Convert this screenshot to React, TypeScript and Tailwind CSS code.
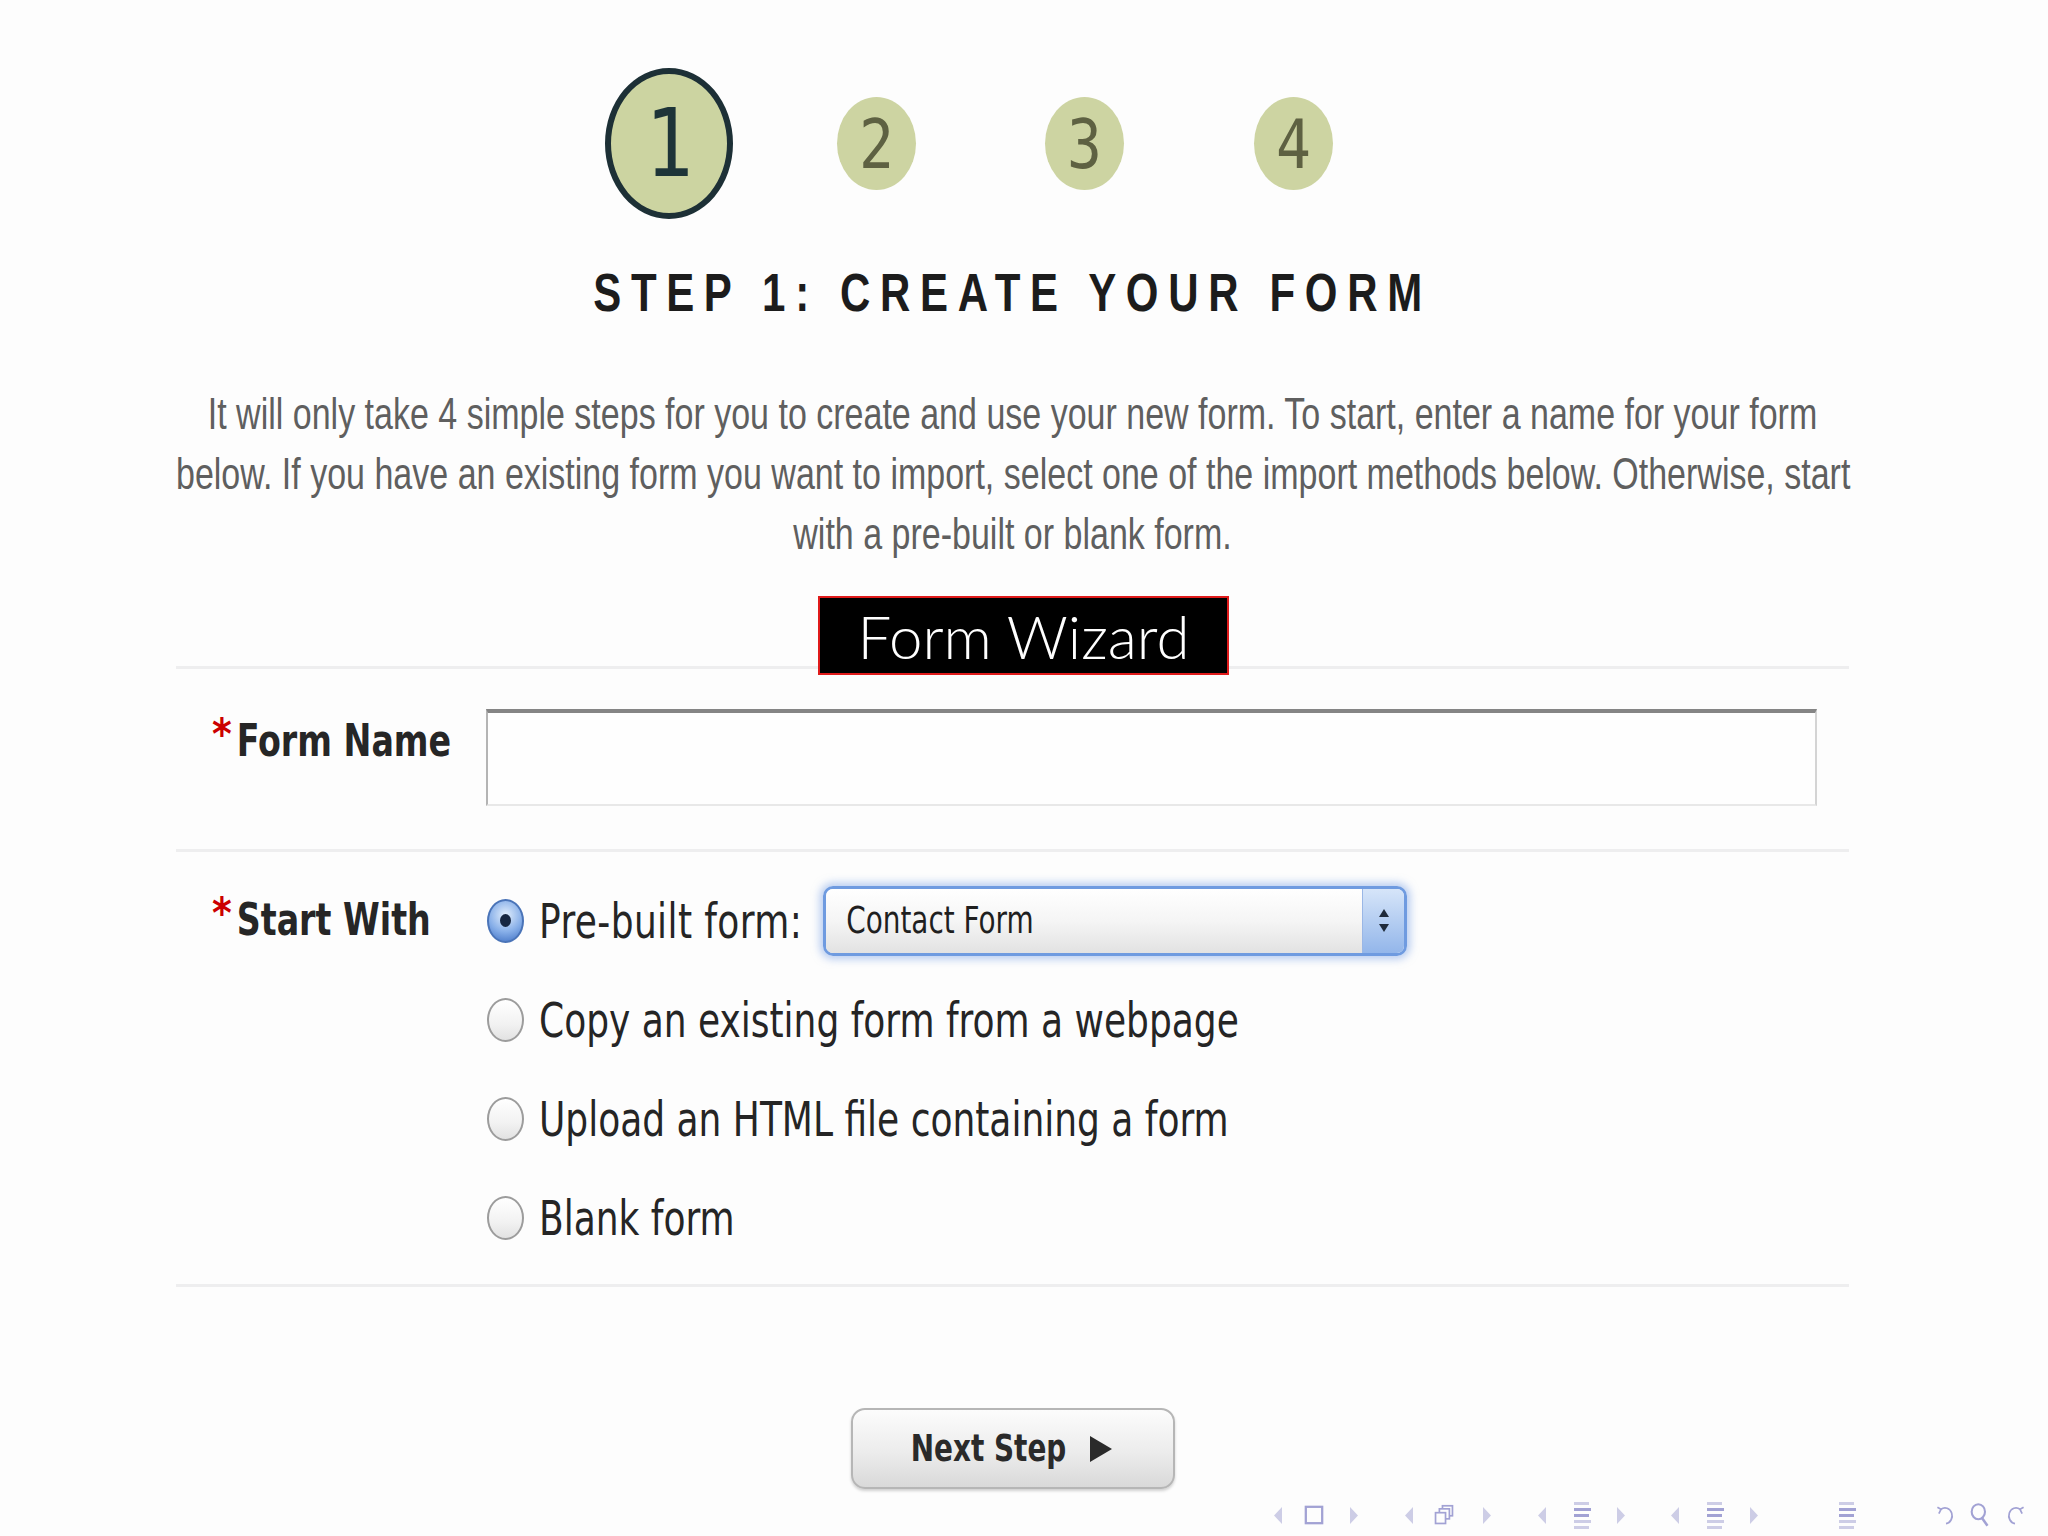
import React from 'react';

const condensed = "font-['DejaVu_Sans_Condensed','DejaVu_Sans',sans-serif] [font-stretch:condensed]";
const narrow = "font-['Liberation_Sans_Narrow','Liberation_Sans',sans-serif] [font-stretch:condensed]";

function StepCircle({ n, active, className = '' }: { n: number; active?: boolean; className?: string }) {
  if (active) {
    return (
      <div
        className={`flex h-[151px] w-[128px] items-center justify-center rounded-[50%] border-[6px] border-[#1d3036] bg-[#ccd4a1] ${className}`}
      >
        <span className="scale-y-[1.18] font-['DejaVu_Sans_Mono',monospace] text-[80px] leading-none text-[#1d3438]">
          {n}
        </span>
      </div>
    );
  }
  return (
    <div className={`flex h-[93px] w-[79px] items-center justify-center rounded-[50%] bg-[#cdd4a2] ${className}`}>
      <span className="scale-y-[1.18] font-['DejaVu_Sans_Mono',monospace] text-[58px] leading-none text-[#5e6142]">
        {n}
      </span>
    </div>
  );
}

function Radio({ checked }: { checked?: boolean }) {
  if (checked) {
    return (
      <span className="flex h-[44px] w-[37px] shrink-0 items-center justify-center rounded-[50%] border-2 border-[#4a74b8] bg-[radial-gradient(circle_at_50%_35%,#e2eefc,#86aee8_55%,#3e6fc2)]">
        <span className="h-[13px] w-[11px] rounded-[50%] bg-[#172640]" />
      </span>
    );
  }
  return (
    <span className="h-[44px] w-[37px] shrink-0 rounded-[50%] border-2 border-[#9c9c9c] bg-[linear-gradient(#ffffff,#f2f2f2_60%,#e2e2e2)]" />
  );
}

function Label({ text }: { text: string }) {
  return (
    <span className={`flex items-start text-[37px] leading-[40px] font-bold text-[#262626] ${condensed}`}>
      <span className="-mt-[8px] mr-[5px] text-[42px] leading-none text-[#cc0000]">*</span>
      <span className="inline-block scale-y-[1.2]">{text}</span>
    </span>
  );
}

const options = [
  'Copy an existing form from a webpage',
  'Upload an HTML file containing a form',
  'Blank form',
];

function NavIcons() {
  const light = '#cdcde6';
  const dark = '#a2a2d4';
  const tri = (dir: 'l' | 'r', ml: string) => (
    <span className={`flex w-[20px] justify-center ${ml}`}>
      <svg width="11" height="19" viewBox="0 0 11 19">
        <path d={dir === 'l' ? 'M10 1 L2 9.5 L10 18 Z' : 'M1 1 L9 9.5 L1 18 Z'} fill={light} />
      </svg>
    </span>
  );
  const lines = (ml: string) => (
    <span className={`flex w-[20px] justify-center ${ml}`}>
      <svg width="20" height="28" viewBox="0 0 20 28">
        <rect x="2" y="1" width="15" height="3" fill={light} />
        <rect x="2" y="7" width="17" height="3" fill={dark} />
        <rect x="2" y="13" width="15" height="3" fill={dark} />
        <rect x="2" y="19" width="17" height="3" fill={light} />
        <rect x="2" y="25" width="15" height="3" fill={light} />
      </svg>
    </span>
  );
  return (
    <div className="absolute left-[1267px] top-[1500px] flex h-[30px] items-center">
      {tri('l', '')}
      <span className="ml-[17px] flex w-[20px] justify-center">
        <svg width="22" height="22" viewBox="0 0 22 22">
          <rect x="2" y="2" width="18" height="18" fill="none" stroke={dark} strokeWidth="2.5" />
        </svg>
      </span>
      {tri('r', 'ml-[20px]')}
      {tri('l', 'ml-[34px]')}
      <span className="ml-[16px] flex w-[20px] justify-center">
        <svg width="26" height="28" viewBox="0 0 26 28">
          <rect x="11" y="2" width="13" height="13" fill="none" stroke={dark} strokeWidth="2.2" />
          <rect x="7" y="6" width="13" height="13" fill="#fdfdfd" stroke={dark} strokeWidth="2.2" />
          <rect x="2" y="11" width="13" height="14" fill="#fdfdfd" stroke={dark} strokeWidth="2.2" />
        </svg>
      </span>
      {tri('r', 'ml-[23px]')}
      {tri('l', 'ml-[34px]')}
      {lines('ml-[21px]')}
      {tri('r', 'ml-[19px]')}
      {tri('l', 'ml-[33px]')}
      {lines('ml-[21px]')}
      {tri('r', 'ml-[19px]')}
      {lines('ml-[73px]')}
      <span className="ml-[79px] flex w-[20px] justify-center">
        <svg width="28" height="30" viewBox="0 0 28 30">
          <path d="M7 7 A10 11 0 1 1 14 27" fill="none" stroke={dark} strokeWidth="2.4" />
          <path d="M2 4 L7 7 L4 13" fill="none" stroke={dark} strokeWidth="2.4" />
        </svg>
      </span>
      <span className="ml-[14px] flex w-[20px] justify-center">
        <svg width="24" height="30" viewBox="0 0 24 30">
          <ellipse cx="10" cy="11" rx="8" ry="9" fill="none" stroke={dark} strokeWidth="2.5" />
          <path d="M14 18 L21 28" stroke={dark} strokeWidth="3" />
        </svg>
      </span>
      <span className="ml-[15px] flex w-[20px] justify-center">
        <svg width="28" height="30" viewBox="0 0 28 30">
          <path d="M21 7 A10 11 0 1 0 14 27" fill="none" stroke={dark} strokeWidth="2.4" />
          <path d="M26 4 L21 7 L24 13" fill="none" stroke={dark} strokeWidth="2.4" />
        </svg>
      </span>
    </div>
  );
}

export default function App() {
  return (
    <div className="relative h-[1536px] w-full overflow-hidden bg-[#fdfdfd]">
      <div className="ml-[176px] w-[1673px] pt-[68px]">
        {/* steps */}
        <div className="ml-[429px] flex items-center">
          <StepCircle n={1} active />
          <StepCircle n={2} className="ml-[104px]" />
          <StepCircle n={3} className="ml-[129px]" />
          <StepCircle n={4} className="ml-[130px]" />
        </div>

        <h1 className="mt-[50px] text-center font-['Liberation_Sans',sans-serif] text-[42px] leading-[48px] font-bold tracking-[0.23em] text-[#1c1c1c]">
          <span className="inline-block scale-y-[1.28]">STEP 1: CREATE YOUR FORM</span>
        </h1>

        <p className={`mt-[66px] text-center text-[34px] leading-[60px] whitespace-nowrap text-[#5f5f5f] ${narrow}`}>
          <span className="inline-block scale-y-[1.33]">
            It will only take 4 simple steps for you to create and use your new form. To start, enter a name for your form
          </span>
          <br />
          <span className="inline-block scale-y-[1.33]">
            below. If you have an existing form you want to import, select one of the import methods below. Otherwise, start
          </span>
          <br />
          <span className="inline-block scale-y-[1.33]">with a pre-built or blank form.</span>
        </p>

        <div className="mt-[103px] h-[3px] bg-[#eeeeef]" />

        {/* form name */}
        <div className="flex items-start pt-[40px] pb-[43px]">
          <div className="w-[310px] pt-[13px] pl-[36px]">
            <Label text="Form Name" />
          </div>
          <div className="h-[97px] w-[1331px] border-t-[4px] border-r-2 border-b-2 border-l-2 border-t-[#858585] border-r-[#d4d4d4] border-b-[#e8e8e8] border-l-[#b4b4b4] bg-[#fefefe]" />
        </div>

        <div className="h-[3px] bg-[#eeeeef]" />

        {/* start with */}
        <div className="flex items-start pt-[19px] pb-[17px]">
          <div className="flex h-[99px] w-[311px] items-center pl-[36px]">
            <Label text="Start With" />
          </div>
          <div className={`flex flex-col text-[40px] text-[#252525] ${condensed}`}>
            <div className="flex h-[99px] items-center">
              <Radio checked />
              <span className="ml-[15px] inline-block scale-y-[1.2] tracking-[0.01em]">Pre-built form:</span>
              <div className="ml-[21px] flex h-[70px] w-[584px] overflow-hidden rounded-[10px] border-[3px] border-[#6f9be0] shadow-[0_0_8px_3px_rgba(120,160,230,0.55)]">
                <div className="flex flex-1 items-center bg-[linear-gradient(#ffffff,#f5f5f5_50%,#e2e2e2)] pl-[20px] text-[31px] text-[#1f1f1f]">
                  <span className="inline-block scale-y-[1.2]">Contact Form</span>
                </div>
                <div className="flex w-[42px] flex-col items-center justify-center gap-[7px] border-l border-[#9ab7e6] bg-[linear-gradient(#d6e5f9,#93b6ea)]">
                  <svg width="10" height="8" viewBox="0 0 10 8">
                    <path d="M5 0 L10 8 L0 8 Z" fill="#1f2a3a" />
                  </svg>
                  <svg width="10" height="8" viewBox="0 0 10 8">
                    <path d="M0 0 L10 0 L5 8 Z" fill="#1f2a3a" />
                  </svg>
                </div>
              </div>
            </div>
            {options.map((label) => (
              <div key={label} className="flex h-[99px] items-center">
                <Radio />
                <span className="ml-[15px] inline-block scale-y-[1.2]">{label}</span>
              </div>
            ))}
          </div>
        </div>

        <div className="h-[3px] bg-[#eeeeef]" />

        <button
          className={`mx-auto mt-[121px] flex h-[81px] w-[324px] items-center justify-center gap-[22px] rounded-[14px] border-2 border-[#b6b6b6] bg-[linear-gradient(#fcfcfc,#ececec_55%,#d9d9d9)] text-[31px] font-bold text-[#2a2a2a] shadow-[0_2px_3px_rgba(0,0,0,0.18)] ${condensed}`}
        >
          <span className="inline-block scale-y-[1.2]">Next Step</span>
          <svg width="26" height="30" viewBox="0 0 26 30">
            <path d="M2 2 L24 15 L2 28 Z" fill="#2a2a2a" />
          </svg>
        </button>
      </div>

      {/* beamer frame title overlay */}
      <div className="absolute top-[596px] left-[818px] flex h-[79px] w-[411px] items-center justify-center border-2 border-[#e01b1b] bg-black font-['Lato',sans-serif] text-[60px] leading-none font-light text-white">
        Form Wizard
      </div>

      <NavIcons />
    </div>
  );
}
